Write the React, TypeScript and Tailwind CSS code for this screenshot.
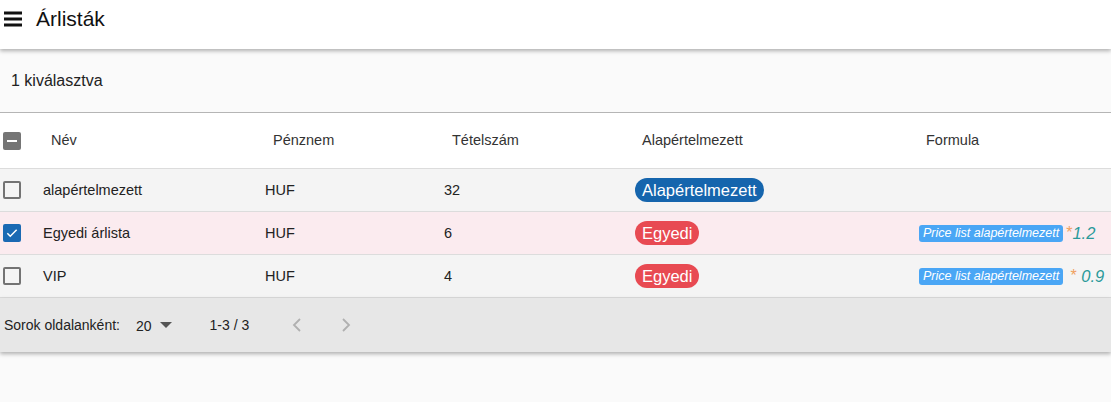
import React from "react";

const grid = "grid grid-cols-[43px_222px_179px_191px_284px_1fr] items-center";

function Box({ state }: { state: "none" | "checked" | "indeterminate" }) {
  if (state === "checked")
    return (
      <div className="w-[18px] h-[18px] rounded-[2px] bg-[#1a69b3] flex items-center justify-center">
        <svg width="14" height="14" viewBox="0 0 24 24">
          <path d="M4 12.5l5 5L20 6.5" stroke="white" strokeWidth="2.6" fill="none" />
        </svg>
      </div>
    );
  if (state === "indeterminate")
    return (
      <div className="w-[18px] h-[18px] rounded-[2px] bg-[#757575] flex items-center justify-center">
        <div className="w-[10px] h-[2px] bg-white" />
      </div>
    );
  return <div className="w-[18px] h-[18px] rounded-[2px] border-2 border-[#737373] box-border" />;
}

const rows = [
  { name: "alapértelmezett", cur: "HUF", n: "32", def: true, sel: false },
  { name: "Egyedi árlista", cur: "HUF", n: "6", def: false, sel: true, f: "*", v: "1.2" },
  { name: "VIP", cur: "HUF", n: "4", def: false, sel: false, f: " * ", v: "0.9" },
];

export default function App() {
  return (
    <div className="w-[1111px] h-[402px] bg-[#fafafa] overflow-hidden text-[#222]" style={{ fontFamily: '"Liberation Sans", Arial, sans-serif' }}>
      <div className="h-[49px] bg-white flex items-center shadow-[0_2px_4px_rgba(0,0,0,0.3)] relative z-10">
        <svg className="ml-[3px] mt-[-12px]" width="20" height="20" viewBox="0 0 20 20">
          <rect x="1" y="2.5" width="18" height="3" fill="#111" />
          <rect x="1" y="8.5" width="18" height="3" fill="#111" />
          <rect x="1" y="14.5" width="18" height="3" fill="#111" />
        </svg>
        <span className="ml-[13px] text-[21px] text-[#111] mt-[-12px]">Árlisták</span>
      </div>
      <div className="h-[64px] bg-[#fafafa] flex items-center pl-[11px] text-[16px] text-[#222] border-b border-[#b5b5b5]">
        1 kiválasztva
      </div>
      <div className={`${grid} h-[56px] bg-white border-b border-[#dcdcdc] text-[14.5px] text-[#333]`}>
        <div className="pl-[3px]"><Box state="indeterminate" /></div>
        <div className="pl-2">Név</div>
        <div className="pl-2">Pénznem</div>
        <div className="pl-2">Tételszám</div>
        <div className="pl-[7px]">Alapértelmezett</div>
        <div className="pl-[7px]">Formula</div>
      </div>
      {rows.map((r) => (
        <div key={r.name} className={`${grid} h-[43px] border-b border-[#dcdcdc] text-[14.5px] text-[#222] ${r.sel ? "bg-[#fbebef]" : "bg-[#f4f4f4]"}`}>
          <div className="pl-[3px]"><Box state={r.sel ? "checked" : "none"} /></div>
          <div className="pt-[2px]">{r.name}</div>
          <div className="pt-[2px]">{r.cur}</div>
          <div className="pt-[2px]">{r.n}</div>
          <div>
            {r.def ? (
              <span className="inline-block rounded-full bg-[#1565ad] text-white text-[16.5px] leading-[24px] px-[7px]">Alapértelmezett</span>
            ) : (
              <span className="inline-block rounded-full bg-[#e84a52] text-white text-[16.5px] leading-[24px] px-[7px]">Egyedi</span>
            )}
          </div>
          <div className="flex items-center">
            {r.v && (
              <>
                <span className="inline-block rounded-[3px] bg-[#4aa6f5] text-white text-[12.5px] italic leading-[17px] px-[4px] mt-[1px]">Price list alapértelmezett</span>
                <span className="text-[16px] text-[#f0a060] whitespace-pre ml-[3px]">{r.f}</span>
                <span className="text-[16.5px] italic text-[#2a9a9a]">{r.v}</span>
              </>
            )}
          </div>
        </div>
      ))}
      <div className="h-[54px] bg-[#e7e7e7] flex items-center text-[14px] text-[#222] shadow-[0_2px_4px_rgba(0,0,0,0.3)]">
        <span className="ml-[4px]">Sorok oldalanként:</span>
        <span className="ml-[16px] mt-[3px]">20</span>
        <svg className="ml-[8px]" width="12" height="6" viewBox="0 0 12 6"><path d="M0 0h12L6 6z" fill="#555" /></svg>
        <span className="ml-[38px]">1-3 / 3</span>
        <svg className="ml-[43px]" width="10" height="14" viewBox="0 0 10 14"><path d="M8 1L2 7l6 6" stroke="#b0b0b0" strokeWidth="1.8" fill="none" /></svg>
        <svg className="ml-[39px]" width="10" height="14" viewBox="0 0 10 14"><path d="M2 1l6 6-6 6" stroke="#b0b0b0" strokeWidth="1.8" fill="none" /></svg>
      </div>
    </div>
  );
}
